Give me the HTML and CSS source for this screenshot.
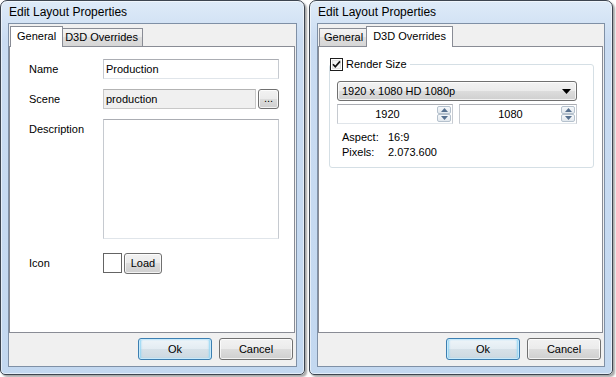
FILE: index.html
```html
<!DOCTYPE html>
<html>
<head>
<meta charset="utf-8">
<link rel="stylesheet" href="styles.css">
</head>
<body>
<div class="desk">
  <div class="window">
    <div class="title">Edit Layout Properties</div>
    <div class="client">
      <div class="tabs">
        <div class="tab active">General</div>
        <div class="tab">D3D Overrides</div>
      </div>
      <div class="page">
        <div class="form">
          <div class="row"><span class="lbl">Name</span><div class="tb full">Production</div></div>
          <div class="row gap10"><span class="lbl">Scene</span><div class="tb ro">production</div><div class="btn dots">...</div></div>
          <div class="row gap10"><span class="lbl">Description</span><div class="tb full area"></div></div>
          <div class="row gap14"><span class="lbl">Icon</span><div class="iconbox"></div><div class="btn load">Load</div></div>
        </div>
      </div>
      <div class="bar">
        <div class="btn dlg default">Ok</div>
        <div class="btn dlg">Cancel</div>
      </div>
    </div>
  </div>

  <div class="window">
    <div class="title">Edit Layout Properties</div>
    <div class="client">
      <div class="tabs">
        <div class="tab">General</div>
        <div class="tab active">D3D Overrides</div>
      </div>
      <div class="page">
        <div class="group">
          <div class="ghead">
            <svg class="chk" width="13" height="13" viewBox="0 0 13 13"><rect x="0.5" y="0.5" width="12" height="12" fill="#fff" stroke="#1e1e1e"/><rect x="2.5" y="2.5" width="8" height="8" fill="#f4f4f4" stroke="#e0e0e0"/><path d="M3 6.2 L5.3 8.8 L10 3.4" fill="none" stroke="#111" stroke-width="1.7"/></svg>
            <span>Render Size</span>
          </div>
          <div class="gbody">
            <div class="combo"><span>1920 x 1080 HD 1080p</span><svg width="9" height="5" viewBox="0 0 9 5"><path d="M0 0 H9 L4.5 5 Z" fill="#000"/></svg></div>
            <div class="spins">
              <div class="spin s1"><span class="val">1920</span><div class="arrows"><div class="ab"><svg width="7" height="4" viewBox="0 0 7 4"><path d="M0 4 L3.5 0 L7 4 Z" fill="#56708f"/></svg></div><div class="ab"><svg width="7" height="4" viewBox="0 0 7 4"><path d="M0 0 L3.5 4 L7 0 Z" fill="#56708f"/></svg></div></div></div>
              <div class="spin s2"><span class="val">1080</span><div class="arrows"><div class="ab"><svg width="7" height="4" viewBox="0 0 7 4"><path d="M0 4 L3.5 0 L7 4 Z" fill="#56708f"/></svg></div><div class="ab"><svg width="7" height="4" viewBox="0 0 7 4"><path d="M0 0 L3.5 4 L7 0 Z" fill="#56708f"/></svg></div></div></div>
            </div>
            <div class="info">
              <span>Aspect:</span><span>16:9</span>
              <span>Pixels:</span><span>2.073.600</span>
            </div>
          </div>
        </div>
      </div>
      <div class="bar">
        <div class="btn dlg default">Ok</div>
        <div class="btn dlg">Cancel</div>
      </div>
    </div>
  </div>
</div>
</body>
</html>
```

FILE: styles.css
```css
* { box-sizing: border-box; }
html, body { margin: 0; padding: 0; background: #fff; }
body { font-family: "Liberation Sans", Arial, sans-serif; font-size: 11px; color: #000; }

.desk { display: flex; gap: 4px; width: 616px; height: 377px; }

.window {
  width: 305px;
  height: 375px;
  display: flex;
  flex-direction: column;
  border: 1px solid #3d4550;
  border-radius: 7px 7px 5px 5px;
  padding: 0 7px 7px 7px;
  background: linear-gradient(#deebf8, #cadcf2 40px, #c3d8f0);
  box-shadow: inset 0 0 0 1px rgba(255,255,255,0.55), 2px 2px 2px rgba(0,0,0,0.35);
}
.window:last-child { width: 304px; }

.title {
  height: 22px;
  line-height: 22px;
  padding-left: 1px;
  font-size: 12px;
  color: #000;
  white-space: nowrap;
}

.client {
  flex: 1;
  display: flex;
  flex-direction: column;
  border: 1px solid #7f90a6;
  background: #f0f0f0;
}

.tabs {
  height: 20px;
  margin-top: 2px;
  padding-left: 1px;
  display: flex;
  align-items: flex-end;
}
.tab {
  height: 18px;
  line-height: 16px;
  padding: 0 4px;
  border: 1px solid #898c95;
  border-bottom: none;
  background: linear-gradient(#f3f3f3, #ebebeb 50%, #dedede 50%, #d6d6d6);
  white-space: nowrap;
  position: relative;
}
.tab + .tab { margin-left: -1px; }
.tab.active {
  height: 21px;
  line-height: 18px;
  padding: 0 6px;
  margin: 0 -2px -1px -2px;
  background: #fff;
  z-index: 1;
}
.tab.active:first-child { margin-left: 0; }

.page {
  height: 287px;
  margin-right: 1px;
  border: 1px solid #898c95;
  background: #fff;
}

.bar {
  flex: 1;
  display: flex;
  justify-content: flex-end;
  align-items: flex-start;
  gap: 7px;
  padding: 5px 3px 0 0;
}

.btn {
  border: 1px solid #707070;
  border-radius: 3px;
  background: linear-gradient(#f2f2f2, #ebebeb 50%, #dddddd 50%, #cfcfcf);
  box-shadow: inset 0 0 0 1px rgba(255,255,255,0.75);
  text-align: center;
  color: #000;
}
.dlg { width: 74px; height: 22px; line-height: 20px; font-size: 11px; }
.dlg.default {
  border-color: #3c7fb1;
  background: linear-gradient(#eef5f9, #e3ecf2 50%, #d6e1e8 50%, #ccd8e0);
  box-shadow: inset 0 0 0 1px #c8eafb, inset 2px 0 2px #8fd6f5, inset -2px 0 2px #8fd6f5;
}

/* General form */
.form { padding: 12px 0 0 19px; }
.row { display: flex; align-items: flex-start; }
.gap10 { margin-top: 10px; }
.gap14 { margin-top: 14px; }
.lbl { width: 74px; line-height: 20px; white-space: nowrap; }
.tb {
  height: 20px;
  line-height: 18px;
  padding: 0 2px;
  border: 1px solid #c6cad0;
  border-top-color: #abadb3;
  border-bottom-color: #e0e5ea;
  background: #fff;
  font-size: 11px;
}
.tb.full { width: 176px; }
.tb.ro { width: 153px; background: #f0f0f0; border-color: #c8c8c8; border-top-color: #b3b3b3; }
.tb.area { height: 120px; }
.dots { width: 21px; height: 20px; line-height: 16px; margin-left: 2px; font-size: 11px; }
.iconbox { width: 19px; height: 20px; border: 1px solid #646464; background: #fff; }
.load { width: 38px; height: 21px; line-height: 19px; margin-left: 2px; font-size: 11px; }

/* D3D form */
.group {
  margin: 17px 8px 0 10px;
  border: 1px solid #d5dfe5;
  border-radius: 3px;
  display: flex;
  flex-direction: column;
  padding-bottom: 7px;
}
.ghead {
  align-self: flex-start;
  margin-top: -7px;
  height: 13px;
  display: flex;
  align-items: center;
  gap: 3px;
  padding-right: 3px;
  background: #fff;
  font-size: 11px;
  line-height: 13px;
}
.chk { display: block; }
.gbody { padding: 0 0 0 7px; }
.combo {
  margin-top: 10px;
  width: 240px;
  height: 20px;
  padding: 0 5px 0 4px;
  display: flex;
  align-items: center;
  justify-content: space-between;
  border: 1px solid #707070;
  border-radius: 3px;
  background: linear-gradient(#f2f2f2, #ebebeb 50%, #dddddd 50%, #cfcfcf);
  box-shadow: inset 0 0 0 1px rgba(255,255,255,0.75);
  font-size: 11px;
}
.spins { display: flex; gap: 6px; margin-top: 3px; }
.spin {
  height: 20px;
  display: flex;
  border: 1px solid #c6cad0;
  border-top-color: #abadb3;
  border-bottom-color: #e0e5ea;
  background: #fff;
  font-size: 11px;
}
.s1 { width: 116px; }
.s2 { width: 118px; }
.val { flex: 1; text-align: center; line-height: 18px; }
.arrows { width: 15px; display: flex; flex-direction: column; padding: 1px 1px 1px 0; gap: 0; }
.ab {
  flex: 1;
  display: flex;
  align-items: center;
  justify-content: center;
  border: 1px solid #b5c1cd;
  border-radius: 2px;
  background: linear-gradient(#f6f8fa, #e2e8ee);
}
.ab svg { display: block; }
.info {
  margin-top: 6px;
  padding-left: 5px;
  display: grid;
  grid-template-columns: 46px auto;
  line-height: 15px;
  font-size: 11px;
}
```
